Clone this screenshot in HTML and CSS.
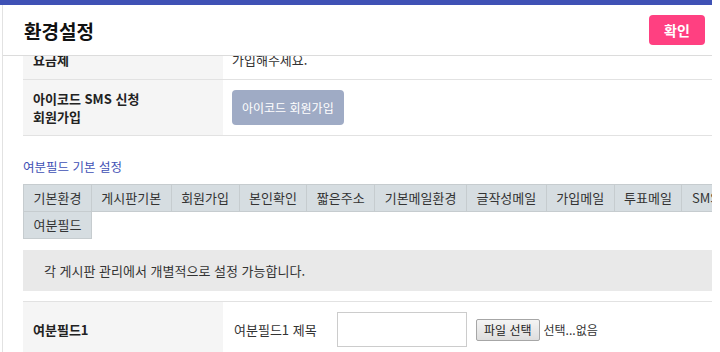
FILE: index.html
```html
<!DOCTYPE html>
<html lang="ko">
<head>
    <meta charset="UTF-8">
    <title>환경설정</title>
    <meta name="viewport" content="width=device-width, initial-scale=1">
    <link rel="stylesheet" href="styles.css">
</head>
<body>
    <div class="topbar"></div>
    <div class="layout">
        <div class="panel">
            <div class="panel-head">
                <h1>환경설정</h1>
                <button class="btn-ok">확인</button>
            </div>
            <div class="panel-body">
                <div class="panel-inner">
                    <table class="form-table">
                        <tr>
                            <th>요금제</th>
                            <td>가입해주세요.</td>
                        </tr>
                        <tr>
                            <th>아이코드 SMS 신청<br>회원가입</th>
                            <td><button class="btn-join">아이코드 회원가입</button></td>
                        </tr>
                    </table>

                    <h2 class="section-title">여분필드 기본 설정</h2>
                    <ul class="tabs">
                        <li>기본환경</li>
                        <li>게시판기본</li>
                        <li>회원가입</li>
                        <li>본인확인</li>
                        <li>짧은주소</li>
                        <li>기본메일환경</li>
                        <li>글작성메일</li>
                        <li>가입메일</li>
                        <li>투표메일</li>
                        <li>SMS설정</li>
                        <li>여분필드</li>
                    </ul>

                    <div class="info">각 게시판 관리에서 개별적으로 설정 가능합니다.</div>

                    <table class="form-table extra">
                        <tr>
                            <th>여분필드1</th>
                            <td>
                                <div class="field-row">
                                    <span class="field-label">여분필드1 제목</span>
                                    <input type="text" class="field-input">
                                    <button class="file-btn">파일 선택</button>
                                    <span class="file-name">선택...없음</span>
                                </div>
                            </td>
                        </tr>
                    </table>
                </div>
            </div>
        </div>
    </div>
</body>
</html>
```

FILE: styles.css
```css
/* Reset & Base */
* {
    box-sizing: border-box;
    margin: 0;
    padding: 0;
}
body {
    width: 720px;
    height: 352px;
    overflow: hidden;
    background: #fff;
    font-family: "Noto Sans CJK KR", "Noto Sans", sans-serif;
    font-size: 13px;
    color: #333;
}
/* Top bar */
.topbar {
    width: 712px;
    height: 5px;
    background: #3f51b5;
}
.layout {
    width: 712px;
    padding-left: 2px;
}
/* Panel */
.panel {
    border-left: 1px solid #e2e2e2;
    height: 347px;
    overflow: hidden;
}
.panel-head {
    height: 51px;
    display: flex;
    align-items: center;
    justify-content: space-between;
    padding: 0 7px 0 21px;
    border-bottom: 1px solid #dcdcdc;
}
.panel-head h1 {
    font-size: 19px;
    font-weight: 700;
    color: #111;
}
.btn-ok {
    width: 56px;
    height: 30px;
    border: none;
    border-radius: 4px;
    background: #ff4081;
    color: #fff;
    font-family: inherit;
    font-size: 14px;
    font-weight: 700;
}
/* Body */
.panel-body {
    height: 296px;
    overflow: hidden;
}
.panel-inner {
    width: 800px;
    margin-top: -16px;
    padding-left: 20px;
}
/* Form table */
.form-table {
    width: 100%;
    border-collapse: collapse;
}
.form-table th,
.form-table td {
    border-bottom: 1px solid #e2e2e2;
    text-align: left;
    vertical-align: middle;
}
.form-table th {
    width: 200px;
    background: #f5f5f5;
    padding: 9px 10px;
    line-height: 18px;
    font-weight: 700;
    color: #222;
}
.form-table td {
    padding: 10px 9px;
    line-height: 19px;
}
.btn-join {
    height: 35px;
    padding: 0 10px;
    border: none;
    border-radius: 4px;
    background: #9fabc5;
    color: #fff;
    font-family: inherit;
    font-size: 12px;
}
/* Section */
.section-title {
    margin-top: 22px;
    margin-bottom: 8px;
    font-size: 12.5px;
    font-weight: 400;
    line-height: 18px;
    color: #3f51b5;
}
/* Tabs */
.tabs {
    list-style: none;
    display: flex;
    flex-wrap: wrap;
    width: 780px;
}
.tabs li {
    height: 28px;
    line-height: 26px;
    padding: 0 9.5px;
    margin: 0 -1px -1px 0;
    background: #d6dde1;
    border: 1px solid #c6cccf;
    color: #333;
}
/* Info box */
.info {
    margin-top: 12px;
    height: 41px;
    line-height: 41px;
    padding-left: 21px;
    background: #e9e9e9;
}
/* Extra field row */
.form-table.extra {
    margin-top: 10px;
    border-top: 1px solid #e2e2e2;
}
.form-table.extra td {
    padding: 10px 11px;
}
.field-row {
    display: flex;
    align-items: center;
}
.field-label {
    width: 103px;
}
.field-input {
    width: 130px;
    height: 35px;
    border: 1px solid #ccc;
}
.file-btn {
    margin-left: 9px;
    height: 22px;
    padding: 0 7px;
    border: 1px solid #a6a6a6;
    border-radius: 2px;
    background: linear-gradient(#f4f4f4, #dedede);
    font-family: inherit;
    font-size: 12px;
    color: #222;
}
.file-name {
    margin-left: 4px;
    font-size: 12px;
}
```
